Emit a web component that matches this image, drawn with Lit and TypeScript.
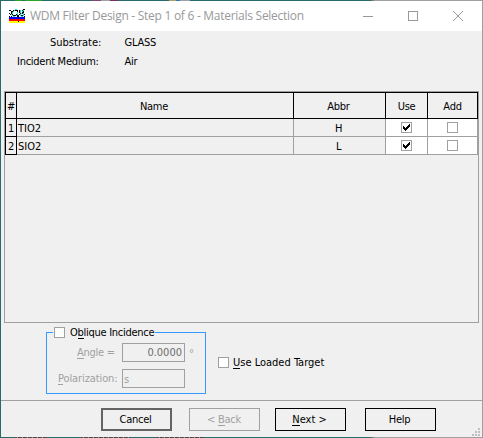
import { LitElement, html, css, svg } from "lit";
import { customElement } from "lit/decorators.js";

const ICON = [
  "......cc......kk",
  "kk..kckkk.kc.kc.",
  "..kkc...k.kc.ck.",
  "..kc....c.kc.kk.",
  "k.kc....c..kckc.",
  ".kck...kc.kc..ck",
  "...ckkkckk.ckkc.",
  "k.k.cc..kk..cc.k",
  "bbbbbbbbbkbbbbbb",
  "bbbbbbbbbbbbbbbb",
  "rrrrrrrrrrrrrrrr",
  "rrrrrrrrrrrrrrrr",
  "yyyyyyyyykyyyyyy",
  "yyyyyyyyyyyyyyyy",
];
const INK: Record<string, string> = { k: "#000", c: "#19e6e6", b: "#00f", r: "#f00", y: "#ff0" };

@customElement("app-root")
export class AppRoot extends LitElement {
  static styles = css`
    :host { display: block; width: 483px; height: 438px; font: 11px/13px "DejaVu Sans Condensed", "DejaVu Sans", sans-serif; font-stretch: condensed; letter-spacing: -0.27px; color: #000; }
    * { box-sizing: border-box; }
    svg { display: block; shape-rendering: crispEdges; }
    .frame {
      height: 438px;
      padding: 1px;
      background:
        linear-gradient(90deg, #0000 15px, #28a428 15px 22px, #0000 22px 25px, #28a428 25px 42px, #0000 42px 92px, #84477b 92px 101px, #a0a0a0 101px 110px, #783060 110px 118px, #0000 118px 169px, #b0a070 169px 176px, #2c78b8 176px 180px, #a0a0a8 180px 190px, #0000 190px) 0 0 / 100% 1px no-repeat,
        repeating-linear-gradient(90deg, #5c4a48 0 2px, #a8968a 2px 3px, #3c4444 3px 5px) 15px 437px / 32px 1px no-repeat,
        repeating-linear-gradient(90deg, #5c4a48 0 2px, #a8968a 2px 3px, #3c4444 3px 5px) 81px 437px / 49px 1px no-repeat,
        repeating-linear-gradient(90deg, #5c4a48 0 2px, #a8968a 2px 3px, #3c4444 3px 5px) 157px 437px / 47px 1px no-repeat,
        linear-gradient(90deg, #296b6b 371px, #777 371px 374px, #a0a0a0 374px);
    }
    .window { height: 436px; background: #f0f0f0; display: flex; flex-direction: column; }
    .title { height: 30px; background: #fff; display: flex; align-items: center; color: #999; padding-left: 8px; }
    .caption { font: 12px/16px "Open Sans", sans-serif; margin-left: 5px; width: 333px; white-space: nowrap; }
    .controls { display: flex; gap: 35px; margin-top: -1px; }
    .info { height: 60px; padding-top: 5px; display: grid; grid-template-columns: 123.5px 1fr; grid-template-rows: 19px 19px; }
    .substrate { padding-left: 49px; letter-spacing: 0; }
    .medium { padding-left: 16px; }
    .t { display: inline-block; white-space: nowrap; }
    .info, .table, .options, .footer { flex: none; }
    .table { margin-left: 3px; width: 475px; height: 232px; border: 1px solid #a0a0a0; }
    .row { display: grid; grid-template-columns: 12px 277px 92px 42px 50px; height: 18px; }
    .row > div { border-right: 1px solid #a0a0a0; border-bottom: 1px solid #a0a0a0; display: flex; align-items: center; justify-content: center; padding-top: 2px; }
    .row > div:nth-child(3) { padding-right: 2px; }
    .row > div:first-child { border-color: #000; border-left: 1px solid #000; }
    .row > div.name { justify-content: flex-start; padding-left: 1px; letter-spacing: 0; }
    .row.head { height: 27px; border-top: 1px solid #000; }
    .row.head > div { border-color: #000; }
    .row.head > div:nth-child(2) { padding-right: 2px; }
    .row > div.white { background: #fff; padding-top: 0; }
    .box { width: 11px; height: 11px; border: 1px solid #a0a0a0; background: #fff; flex: none; }
    .options { height: 77px; display: flex; padding-left: 45px; }
    .group { width: 160px; height: 62px; margin-top: 9px; border: 1px solid #3399ff; padding-left: 6px; }
    .legend { display: flex; align-items: center; width: 102px; height: 13px; margin-top: -7px; background: #f0f0f0; padding-left: 1px; gap: 5px; white-space: nowrap; }
    .field { display: flex; height: 19px; color: #a0a0a0; align-items: center; margin-top: 4px; }
    .field + .field { margin-top: 7px; }
    .label { width: 69px; padding-left: 24px; white-space: nowrap; }
    .label.pl { padding-left: 5px; letter-spacing: -0.1px; }
    .input { width: 63px; height: 19px; border: 1px solid #a0a0a0; color: #6d6d6d; display: flex; align-items: center; padding: 0 2px 0 1px; }
    .input.num { justify-content: flex-end; letter-spacing: 0; }
    .input.pol { color: #a0a0a0; padding-top: 2px; }
    .degree { margin-left: 4px; padding-top: 1px; }
    .loaded { display: flex; align-items: center; height: 13px; margin: 33px 0 0 12px; gap: 4px; letter-spacing: 0; }
    .footer { border-top: 1px solid #a0a0a0; height: 37px; padding: 7px 0 0 100px; display: flex; position: relative; }
    .btn { width: 71px; height: 23px; border: 1px solid #000; display: flex; align-items: center; justify-content: center; margin-right: 17px; padding-right: 2px; }
    .btn.cancel { border: 2px solid #646464; }
    .btn.back { border-color: #a0a0a0; color: #a0a0a0; margin-right: 15px; padding-right: 1px; }
    .btn.next { margin-right: 19px; letter-spacing: 0; padding-right: 2px; }
    .grip { position: absolute; right: 2px; bottom: 1px; }
    u { text-decoration: none; box-shadow: 0 -1px 0 currentColor inset; }
  `;

  private check(on = false) {
    return html`<div class="box">${on ? html`<svg width="9" height="9"><path d="M1 3h1v1h1v1h1v-1h1v-1h1v-1h1v-1h1v3h-1v1h-1v1h-1v1h-1v1h-1v-1h-1v-1h-1z"/></svg>` : ""}</div>`;
  }

  render() {
    return html`<div class="frame"><div class="window">
      <div class="title">
        <svg width="16" height="14">${ICON.flatMap((row, y) => [...row].map((c, x) => INK[c] ? svg`<rect x=${x} y=${y} width="1" height="1" fill=${INK[c]}/>` : ""))}</svg>
        <div class="caption"><span class="t">WDM Filter Design - Step 1 of 6 - Materials Selection</span></div>
        <div class="controls">
          <svg width="10" height="10"><path d="M0 5.5h10" stroke="#999"/></svg>
          <svg width="10" height="10"><path d="M.5 .5h9v9h-9z" fill="none" stroke="#999"/></svg>
          <svg width="10" height="10"><path d="M0 0l10 10M10 0L0 10" stroke="#999"/></svg>
        </div>
      </div>
      <div class="info">
        <div class="substrate">Substrate:</div><div>GLASS</div>
        <div class="medium">Incident Medium:</div><div>Air</div>
      </div>
      <div class="table">
        <div class="row head"><div>#</div><div>Name</div><div>Abbr</div><div>Use</div><div>Add</div></div>
        ${[["TIO2", "H"], ["SIO2", "L"]].map(([n, a], i) => html`<div class="row"><div>${i + 1}</div><div class="name">${n}</div><div>${a}</div><div class="white">${this.check(true)}</div><div class="white">${this.check()}</div></div>`)}
      </div>
      <div class="options">
        <div class="group">
          <div class="legend">${this.check()}<span class="t">O<u>b</u>lique Incidence</span></div>
          <div class="field"><div class="label"><u>A</u>ngle =</div><div class="input num">0.0000</div><span class="degree">°</span></div>
          <div class="field"><div class="label pl"><u>P</u>olarization:</div><div class="input pol">s</div></div>
        </div>
        <div class="loaded">${this.check()}<span class="t"><u>U</u>se Loaded Target</span></div>
      </div>
      <div class="footer">
        <div class="btn cancel">Cancel</div><div class="btn back"><span>&lt; <u>B</u>ack</span></div><div class="btn next"><span><u>N</u>ext &gt;</span></div><div class="btn">Help</div>
        <svg class="grip" width="8" height="8"><path d="M6 0h2v2h-2zM3 3h2v2h-2zM6 3h2v2h-2zM0 6h2v2h-2zM3 6h2v2h-2zM6 6h2v2h-2z" fill="#bfbfbf"/></svg>
      </div>
    </div></div>`;
  }
}
